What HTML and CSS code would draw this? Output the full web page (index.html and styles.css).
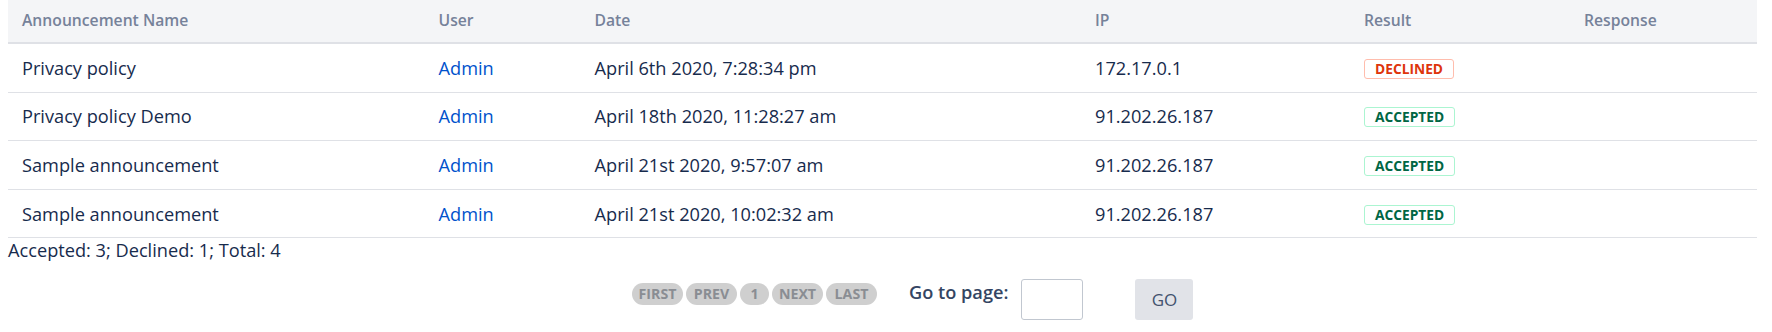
FILE: index.html
```html
<!DOCTYPE html>
<html lang="en">
<head>
<meta charset="utf-8">
<title>Announcement responses</title>
<link rel="stylesheet" href="styles.css">
</head>
<body>
<div class="report">
  <div class="grid-table">
    <div class="row head">
      <div class="cell">Announcement Name</div>
      <div class="cell">User</div>
      <div class="cell">Date</div>
      <div class="cell">IP</div>
      <div class="cell">Result</div>
      <div class="cell">Response</div>
    </div>
    <div class="row">
      <div class="cell">Privacy policy</div>
      <div class="cell"><a class="user" href="#">Admin</a></div>
      <div class="cell">April 6th 2020, 7:28:34 pm</div>
      <div class="cell">172.17.0.1</div>
      <div class="cell"><span class="lozenge declined">Declined</span></div>
      <div class="cell"></div>
    </div>
    <div class="row">
      <div class="cell">Privacy policy Demo</div>
      <div class="cell"><a class="user" href="#">Admin</a></div>
      <div class="cell">April 18th 2020, 11:28:27 am</div>
      <div class="cell">91.202.26.187</div>
      <div class="cell"><span class="lozenge accepted">Accepted</span></div>
      <div class="cell"></div>
    </div>
    <div class="row">
      <div class="cell">Sample announcement</div>
      <div class="cell"><a class="user" href="#">Admin</a></div>
      <div class="cell">April 21st 2020, 9:57:07 am</div>
      <div class="cell">91.202.26.187</div>
      <div class="cell"><span class="lozenge accepted">Accepted</span></div>
      <div class="cell"></div>
    </div>
    <div class="row">
      <div class="cell">Sample announcement</div>
      <div class="cell"><a class="user" href="#">Admin</a></div>
      <div class="cell">April 21st 2020, 10:02:32 am</div>
      <div class="cell">91.202.26.187</div>
      <div class="cell"><span class="lozenge accepted">Accepted</span></div>
      <div class="cell"></div>
    </div>
  </div>
  <div class="summary">Accepted: 3; Declined: 1; Total: 4</div>
  <div class="pager">
    <div class="pills">
      <span class="pill">FIRST</span>
      <span class="pill">PREV</span>
      <span class="pill num">1</span>
      <span class="pill">NEXT</span>
      <span class="pill">LAST</span>
    </div>
    <label class="goto-label" for="goto">Go to page:</label>
    <input id="goto" class="goto-input" type="text">
    <button class="go-btn" type="button">GO</button>
  </div>
</div>
</body>
</html>
```
FILE: styles.css
```css
html, body {
  margin: 0;
  padding: 0;
  background: #ffffff;
}
body {
  font-family: "Open Sans", "Noto Sans", sans-serif;
  font-size: 18.2px;
  color: #172b4d;
}
.report {
  margin: 0 15px 0 8px;
}
.grid-table {
  display: flex;
  flex-direction: column;
}
.row {
  display: grid;
  grid-template-columns: 416.5px 156px 500.5px 269px 220px 1fr;
  height: 48.6px;
  box-sizing: border-box;
  border-bottom: 1px solid #dfe1e6;
  align-items: center;
}
.row.head {
  height: 44px;
  background: #f4f5f7;
  border-bottom: 2px solid #dfe1e6;
  align-items: start;
  padding-top: 8.8px;
  font-size: 15.7px;
  font-weight: 600;
  color: #76829a;
}
.cell {
  padding: 0 14px;
  white-space: nowrap;
}
.user {
  color: #0052cc;
  text-decoration: none;
}
.lozenge {
  display: inline-block;
  box-sizing: border-box;
  height: 20px;
  line-height: 18px;
  padding: 0 10px;
  margin-top: 3px;
  border: 1px solid;
  border-radius: 3px;
  background: #ffffff;
  font-size: 13.75px;
  font-weight: 700;
  text-transform: uppercase;
  vertical-align: top;
}
.lozenge.declined {
  color: #de350b;
  border-color: #ffbdad;
}
.lozenge.accepted {
  color: #006644;
  border-color: #abf5d1;
}
.summary {
  line-height: normal;
}
.pager {
  display: flex;
  align-items: flex-start;
  margin-top: 17px;
  padding-left: 624px;
}
.pills {
  display: flex;
  gap: 3px;
  margin-top: 4px;
}
.pill {
  display: inline-block;
  box-sizing: border-box;
  min-width: 51px;
  height: 22px;
  line-height: 22px;
  padding: 0 6px;
  border-radius: 11px;
  background: #cfcfcf;
  color: #8a8d93;
  font-size: 14.2px;
  font-weight: 700;
  text-align: center;
}
.pill.num {
  min-width: 29px;
}
.goto-label {
  margin-left: 32px;
  margin-top: 1px;
  font-weight: 600;
  color: #344563;
}
.goto-input {
  margin: 0 0 0 13px;
  width: 62px;
  height: 41px;
  box-sizing: border-box;
  border: 1px solid #c1c7d0;
  border-radius: 3px;
  background: #ffffff;
  padding: 0 6px;
  font: inherit;
}
.go-btn {
  margin-left: 52px;
  width: 58px;
  height: 41px;
  border: none;
  border-radius: 3px;
  background: #e1e3e8;
  color: #42526e;
  font-family: "Open Sans", "Noto Sans", sans-serif;
  font-size: 17px;
  padding: 0;
}
```
